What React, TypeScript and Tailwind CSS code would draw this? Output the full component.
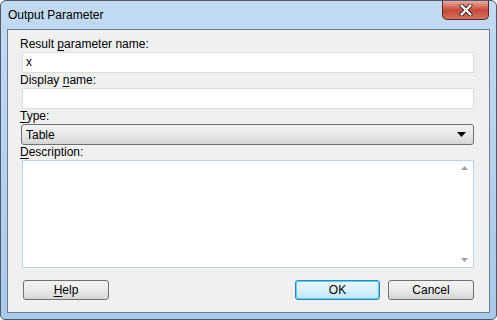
import React from "react";

const font = { fontFamily: '"Liberation Sans", Arial, sans-serif' };

function Label({ pre, u, post }: { pre?: string; u: string; post: string }) {
  return (
    <div className="h-[15px] text-[12px] leading-[14px] text-black ml-[-2px]">
      {pre}
      <span className="underline underline-offset-2">{u}</span>
      {post}
    </div>
  );
}

export default function App() {
  return (
    <div style={font} className="w-[497px] h-[320px] bg-white">
      <div className="w-[497px] h-[320px] rounded-t-[6px] rounded-b-[5px] border border-[#4c5a6b] bg-gradient-to-b from-[#c3daf2] via-[#b8d2ee] to-[#a9c8ea] flex flex-col">
        {/* title bar */}
        <div className="h-[28px] shrink-0 flex items-start justify-between pl-[7px]">
          <div className="pt-[6px] text-[12px] leading-[16px] text-black">Output Parameter</div>
          <div className="mr-[7px] w-[47px] h-[19px] rounded-b-[5px] border border-[#5a2b25] border-t-0 bg-gradient-to-b from-[#e9a99c] via-[#c9473a] to-[#d0705c] flex items-center justify-center">
            <svg width="14" height="12" viewBox="0 0 14 12">
              <path d="M2.5 1.5 L11.5 10.5 M11.5 1.5 L2.5 10.5" stroke="#3b2a2a" strokeWidth="4" strokeLinecap="round" />
              <path d="M2.5 1.5 L11.5 10.5 M11.5 1.5 L2.5 10.5" stroke="#ffffff" strokeWidth="2.2" strokeLinecap="round" />
            </svg>
          </div>
        </div>
        {/* client area */}
        <div className="mx-[6px] h-[284px] shrink-0 border border-[#6d7d91] bg-[#f0f0f0] pl-[14px] pr-[15px] pt-[7px] flex flex-col">
          <Label pre="Result " u="p" post="arameter name:" />
          <div className="h-[21px] border border-[#dcdcdc] bg-white px-[3px] text-[12px] leading-[18px]">x</div>
          <Label pre="Display " u="n" post="ame:" />
          <div className="h-[21px] border border-[#dcdcdc] bg-white" />
          <Label u="T" post="ype:" />
          <div className="ml-[-1px] h-[21px] rounded-[3px] border border-[#707070] bg-gradient-to-b from-[#f2f2f2] via-[#e8e8e8] to-[#d6d6d6] flex items-center justify-between pl-[4px] pr-[7px] text-[12px]">
            <span>Table</span>
            <svg width="9" height="5" viewBox="0 0 9 5">
              <path d="M0 0 H9 L4.5 5 Z" fill="#000" />
            </svg>
          </div>
          <Label u="D" post="escription:" />
          <div className="h-[108px] border border-[#b7d3ec] bg-white flex justify-end">
            <div className="w-[17px] flex flex-col justify-between items-center py-[5px]">
              <svg width="7" height="4" viewBox="0 0 7 4"><path d="M0 4 L3.5 0 L7 4 Z" fill="#a0a0a0" /></svg>
              <svg width="7" height="4" viewBox="0 0 7 4"><path d="M0 0 L7 0 L3.5 4 Z" fill="#a0a0a0" /></svg>
            </div>
          </div>
          <div className="mt-[12px] flex justify-between">
            <button className="ml-[1px] w-[86px] h-[20px] rounded-[3px] border border-[#707070] bg-gradient-to-b from-[#f2f2f2] via-[#ebebeb] to-[#d5d5d5] text-[12px] leading-[18px]">
              <span className="underline underline-offset-2">H</span>elp
            </button>
            <div className="flex gap-[8px]">
              <button className="w-[85px] h-[20px] rounded-[3px] border border-[#3c7fb1] bg-gradient-to-b from-[#eaf6fd] via-[#d9f0fc] to-[#bee6fd] shadow-[inset_0_0_0_1px_#48d7fb] text-[12px] leading-[18px]">
                OK
              </button>
              <button className="w-[86px] h-[20px] rounded-[3px] border border-[#707070] bg-gradient-to-b from-[#f2f2f2] via-[#ebebeb] to-[#d5d5d5] text-[12px] leading-[18px]">
                Cancel
              </button>
            </div>
          </div>
        </div>
      </div>
    </div>
  );
}
